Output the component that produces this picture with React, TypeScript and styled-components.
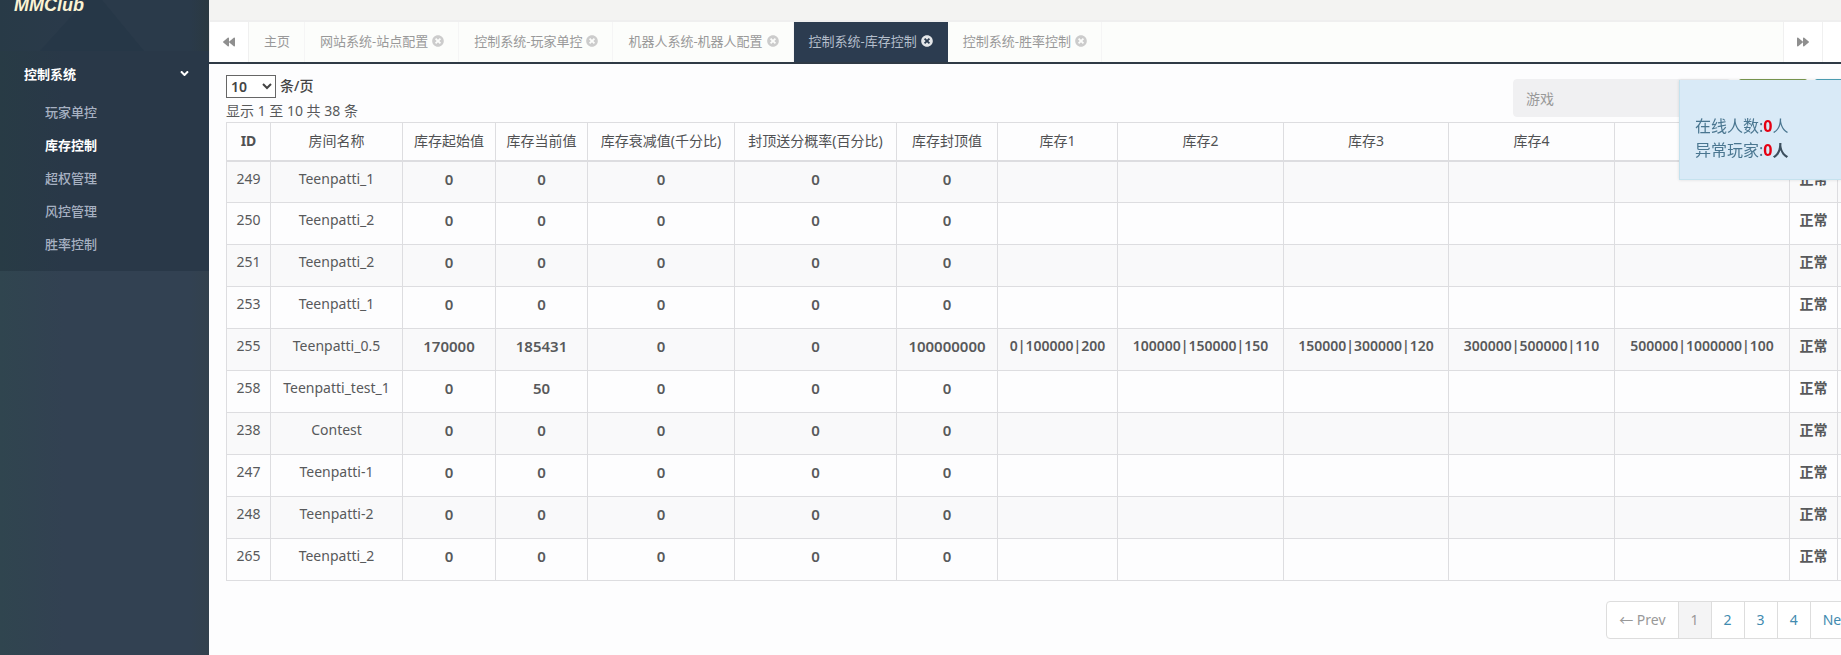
import React from 'react';
import styled, { createGlobalStyle } from 'styled-components';
import { FaBackward, FaForward, FaTimesCircle, FaAngleDown } from 'react-icons/fa';

const GlobalStyle = createGlobalStyle`
  * { box-sizing: border-box; }
  html, body, #root { height: 100%; }
  body {
    margin: 0;
    overflow: hidden;
    background: #fdfdfe;
    color: #58595b;
    font: 14px/20px "Noto Sans", "Noto Sans CJK SC", sans-serif;
  }
  button, input, select { font: inherit; color: inherit; }
  a { text-decoration: none; }
`;

const Page = styled.div`
  display: flex;
  min-height: 100vh;
`;

const Sidebar = styled.nav`
  flex: 0 0 209px;
  background: linear-gradient(90deg, #30454f 0, #324152 64px, #324152 190px, #33414d);
`;

const Brand = styled.header`
  position: relative;
  height: 51px;
  overflow: hidden;
  padding-left: 14px;
  background: linear-gradient(90deg, #283a47 0, #2a3a4a 64px, #2a3a4a 190px, #2b3941);
`;

const BrandShape = styled.svg`
  position: absolute;
  left: 40px;
  bottom: 0;
`;

const Logo = styled.a`
  position: relative;
  display: block;
  margin-top: -6px;
  color: #fbf3d4;
  font: italic bold 18px/22px "Liberation Sans", Arial, sans-serif;
`;

const MenuGroup = styled.section`
  padding-bottom: 10px;
  background: linear-gradient(90deg, #283b45 0, #293848 64px);
`;

const GroupToggle = styled.button`
  display: flex;
  justify-content: space-between;
  align-items: center;
  width: 100%;
  height: 45px;
  padding: 0 18px 0 24px;
  border: 0;
  background: none;
  color: #fff;
  font-size: 13px;
  font-weight: 700;
`;

const MenuList = styled.ul`
  margin: 0;
  padding: 0;
  list-style: none;
`;

const MenuLink = styled.a<{ $active?: boolean }>`
  display: block;
  padding-left: 45px;
  color: ${p => (p.$active ? '#fff' : '#a7b1c2')};
  font-size: 13px;
  font-weight: ${p => (p.$active ? 700 : 500)};
  line-height: 33px;
`;

const Main = styled.main`
  flex: 1;
  min-width: 0;
  overflow: hidden;
`;

const TopStrip = styled.div`
  height: 22px;
  background: #f3f3f2;
  border-bottom: 2px solid #efefef;
`;

const TabBar = styled.div`
  display: flex;
  height: 42px;
  background: #fcfdfb;
  border-bottom: 2px solid #2f3a46;
`;

const RollButton = styled.button`
  flex: 0 0 40px;
  display: flex;
  align-items: center;
  justify-content: center;
  padding: 0;
  border: solid #f0f0f0;
  border-width: 0 1px;
  background: #fff;
  color: #8f8f8f;
`;

const Tabs = styled.div`
  display: flex;
  flex: 1;
  min-width: 0;
`;

const Tab = styled.button<{ $active?: boolean }>`
  display: flex;
  align-items: center;
  gap: 4px;
  height: 40px;
  padding: 0 14px 2px 15px;
  border: 0;
  border-right: 1px solid ${p => (p.$active ? '#2c3c50' : '#f5f5f5')};
  background: ${p => (p.$active ? '#2c3c50' : 'transparent')};
  color: ${p => (p.$active ? '#b4becb' : '#999')};
  font-size: 13px;
  white-space: nowrap;

  svg { color: ${p => (p.$active ? '#e4e6e8' : '#ccc')}; }
`;

const TabEnd = styled.div`
  flex: 0 0 18px;
  background: #fff;
`;

const Content = styled.div`
  padding: 8px 0 0 17px;
`;

const Toolbar = styled.div`
  display: flex;
  justify-content: space-between;
  height: 50px;
`;

const LengthLabel = styled.label`
  display: flex;
  align-items: center;
  gap: 4px;
  height: 28px;
  color: #444;
  font-weight: 500;
`;

const LengthSelect = styled.select`
  width: 50px;
  height: 23px;
  padding: 0;
  border: 1px solid #666;
  border-radius: 0;
  background: #fff;
  font-weight: 600;
`;

const Info = styled.div`
  padding-top: 1px;
`;

const Search = styled.form`
  display: flex;
  flex: 0 0 327px;
  margin-right: -50px;
  padding-top: 7px;
`;

const SearchInput = styled.input`
  width: 218px;
  height: 38px;
  margin-right: 8px;
  padding: 0 12px;
  border: 1px solid #f0f0f2;
  border-radius: 4px;
  background: #f0f0f2;
  &::placeholder { color: #999; opacity: 1; }
`;

const SearchButton = styled.button<{ $tone: string }>`
  flex: 0 0 68px;
  height: 38px;
  margin-right: 8px;
  border: 0;
  border-radius: 2px;
  background: ${p => p.$tone};
`;

const Grid = styled.table`
  width: 1760px;
  table-layout: fixed;
  border-collapse: collapse;
  text-align: center;
`;

const HeadCell = styled.th<{ $bold?: boolean }>`
  height: 38px;
  padding: 0;
  border: 1px solid #dddde0;
  border-bottom-width: 2px;
  color: #505153;
  font-weight: ${p => (p.$bold ? 700 : 400)};
  white-space: nowrap;
`;

const Row = styled.tr`
  &:nth-child(odd) { background: #f9f9fa; }
`;

const Cell = styled.td<{ $kind?: 'number' | 'range' }>`
  height: 42px;
  padding: 7px 0 0;
  border: 1px solid #dddde0;
  font-size: ${p => (p.$kind === 'number' ? 15 : 14)}px;
  font-weight: ${p => (p.$kind ? 600 : 400)};
  vertical-align: top;
  white-space: nowrap;
`;

const Pager = styled.nav`
  display: flex;
  justify-content: flex-end;
  margin: 20px -43px 0 0;
`;

const PageButton = styled.button<{ $current?: boolean; $muted?: boolean }>`
  height: 38px;
  margin-left: -1px;
  padding: 0 12px;
  border: 1px solid #ddd;
  background: ${p => (p.$current ? '#f4f4f5' : '#fff')};
  color: ${p => (p.$muted ? '#999' : '#428bb0')};
  white-space: nowrap;

  &:first-child { border-radius: 4px 0 0 4px; }
  &:last-child { border-radius: 0 4px 4px 0; }
`;

const Notice = styled.aside`
  position: fixed;
  top: 80px;
  right: 0;
  width: 162px;
  height: 100px;
  padding: 34px 15px 0;
  border: solid #c5e2ee;
  border-width: 0 0 1px 1px;
  background: #d9eaf7;
  box-shadow: 0 0 3px rgba(0, 0, 0, 0.12);
  color: #4a7690;
  font-size: 16px;
  line-height: 24px;
`;

const Count = styled.strong`
  color: #e60012;
`;

const Unit = styled.strong`
  color: #3c4f5e;
`;

const menu = ['玩家单控', '库存控制', '超权管理', '风控管理', '胜率控制'];

const tabs = [
  '网站系统-站点配置',
  '控制系统-玩家单控',
  '机器人系统-机器人配置',
  '控制系统-库存控制',
  '控制系统-胜率控制',
];

const columns: [string, number][] = [
  ['ID', 44],
  ['房间名称', 132],
  ['库存起始值', 93],
  ['库存当前值', 92],
  ['库存衰减值(千分比)', 147],
  ['封顶送分概率(百分比)', 162],
  ['库存封顶值', 101],
  ['库存1', 120],
  ['库存2', 166],
  ['库存3', 165],
  ['库存4', 166],
  ['', 175],
  ['', 48],
  ['', 149],
];

type Room = {
  id: number;
  name: string;
  start?: number;
  current?: number;
  cap?: number;
  ranges?: string[];
};

const rooms: Room[] = [
  { id: 249, name: 'Teenpatti_1' },
  { id: 250, name: 'Teenpatti_2' },
  { id: 251, name: 'Teenpatti_2' },
  { id: 253, name: 'Teenpatti_1' },
  {
    id: 255,
    name: 'Teenpatti_0.5',
    start: 170000,
    current: 185431,
    cap: 100000000,
    ranges: [
      '0|100000|200',
      '100000|150000|150',
      '150000|300000|120',
      '300000|500000|110',
      '500000|1000000|100',
    ],
  },
  { id: 258, name: 'Teenpatti_test_1', current: 50 },
  { id: 238, name: 'Contest' },
  { id: 247, name: 'Teenpatti-1' },
  { id: 248, name: 'Teenpatti-2' },
  { id: 265, name: 'Teenpatti_2' },
];

function RoomRow({ room }: { room: Room }) {
  const numbers = [room.start ?? 0, room.current ?? 0, 0, 0, room.cap ?? 0];
  return (
    <Row>
      <Cell>{room.id}</Cell>
      <Cell>{room.name}</Cell>
      {numbers.map((n, i) => (
        <Cell key={i} $kind="number">{n}</Cell>
      ))}
      {[0, 1, 2, 3, 4].map(i => (
        <Cell key={i} $kind="range">{room.ranges?.[i]}</Cell>
      ))}
      <Cell $kind="range">正常</Cell>
      <Cell />
    </Row>
  );
}

export default function App() {
  return (
    <>
      <GlobalStyle />
      <Page>
        <Sidebar>
          <Brand>
            <BrandShape width="104" height="51" aria-hidden="true">
              <path d="M0 51 L46 0 H62 L104 51 Z" fill="#263747" />
            </BrandShape>
            <Logo href="#">MMClub</Logo>
          </Brand>
          <MenuGroup>
            <GroupToggle>
              控制系统
              <FaAngleDown size={13} />
            </GroupToggle>
            <MenuList>
              {menu.map(item => (
                <li key={item}>
                  <MenuLink href="#" $active={item === '库存控制'}>{item}</MenuLink>
                </li>
              ))}
            </MenuList>
          </MenuGroup>
        </Sidebar>
        <Main>
          <TopStrip />
          <TabBar>
            <RollButton aria-label="向左滚动"><FaBackward size={12} /></RollButton>
            <Tabs>
              <Tab>主页</Tab>
              {tabs.map(tab => (
                <Tab key={tab} $active={tab === '控制系统-库存控制'}>
                  {tab}
                  <FaTimesCircle size={12} />
                </Tab>
              ))}
            </Tabs>
            <RollButton aria-label="向右滚动"><FaForward size={12} /></RollButton>
            <TabEnd />
          </TabBar>
          <Content>
            <Toolbar>
              <div>
                <LengthLabel>
                  <LengthSelect defaultValue="10">
                    <option>10</option>
                    <option>25</option>
                    <option>50</option>
                  </LengthSelect>
                  条/页
                </LengthLabel>
                <Info>显示 1 至 10 共 38 条</Info>
              </div>
              <Search onSubmit={e => e.preventDefault()}>
                <SearchInput aria-label="游戏" placeholder="游戏" />
                <SearchButton aria-label="搜索" $tone="#7c9a52" />
                <SearchButton aria-label="刷新" $tone="#4fa3b8" />
              </Search>
            </Toolbar>
            <Grid>
              <colgroup>
                {columns.map(([, width], i) => (
                  <col key={i} width={width} />
                ))}
              </colgroup>
              <thead>
                <tr>
                  {columns.map(([name], i) => (
                    <HeadCell key={i} $bold={name === 'ID'}>{name}</HeadCell>
                  ))}
                </tr>
              </thead>
              <tbody>
                {rooms.map(room => (
                  <RoomRow key={room.id} room={room} />
                ))}
              </tbody>
            </Grid>
            <Pager aria-label="分页">
              <PageButton $muted>← Prev</PageButton>
              <PageButton $muted $current>1</PageButton>
              <PageButton>2</PageButton>
              <PageButton>3</PageButton>
              <PageButton>4</PageButton>
              <PageButton>Next →</PageButton>
            </Pager>
          </Content>
        </Main>
      </Page>
      <Notice>
        <div>在线人数:<Count>0</Count>人</div>
        <div>异常玩家:<Count>0</Count><Unit>人</Unit></div>
      </Notice>
    </>
  );
}
